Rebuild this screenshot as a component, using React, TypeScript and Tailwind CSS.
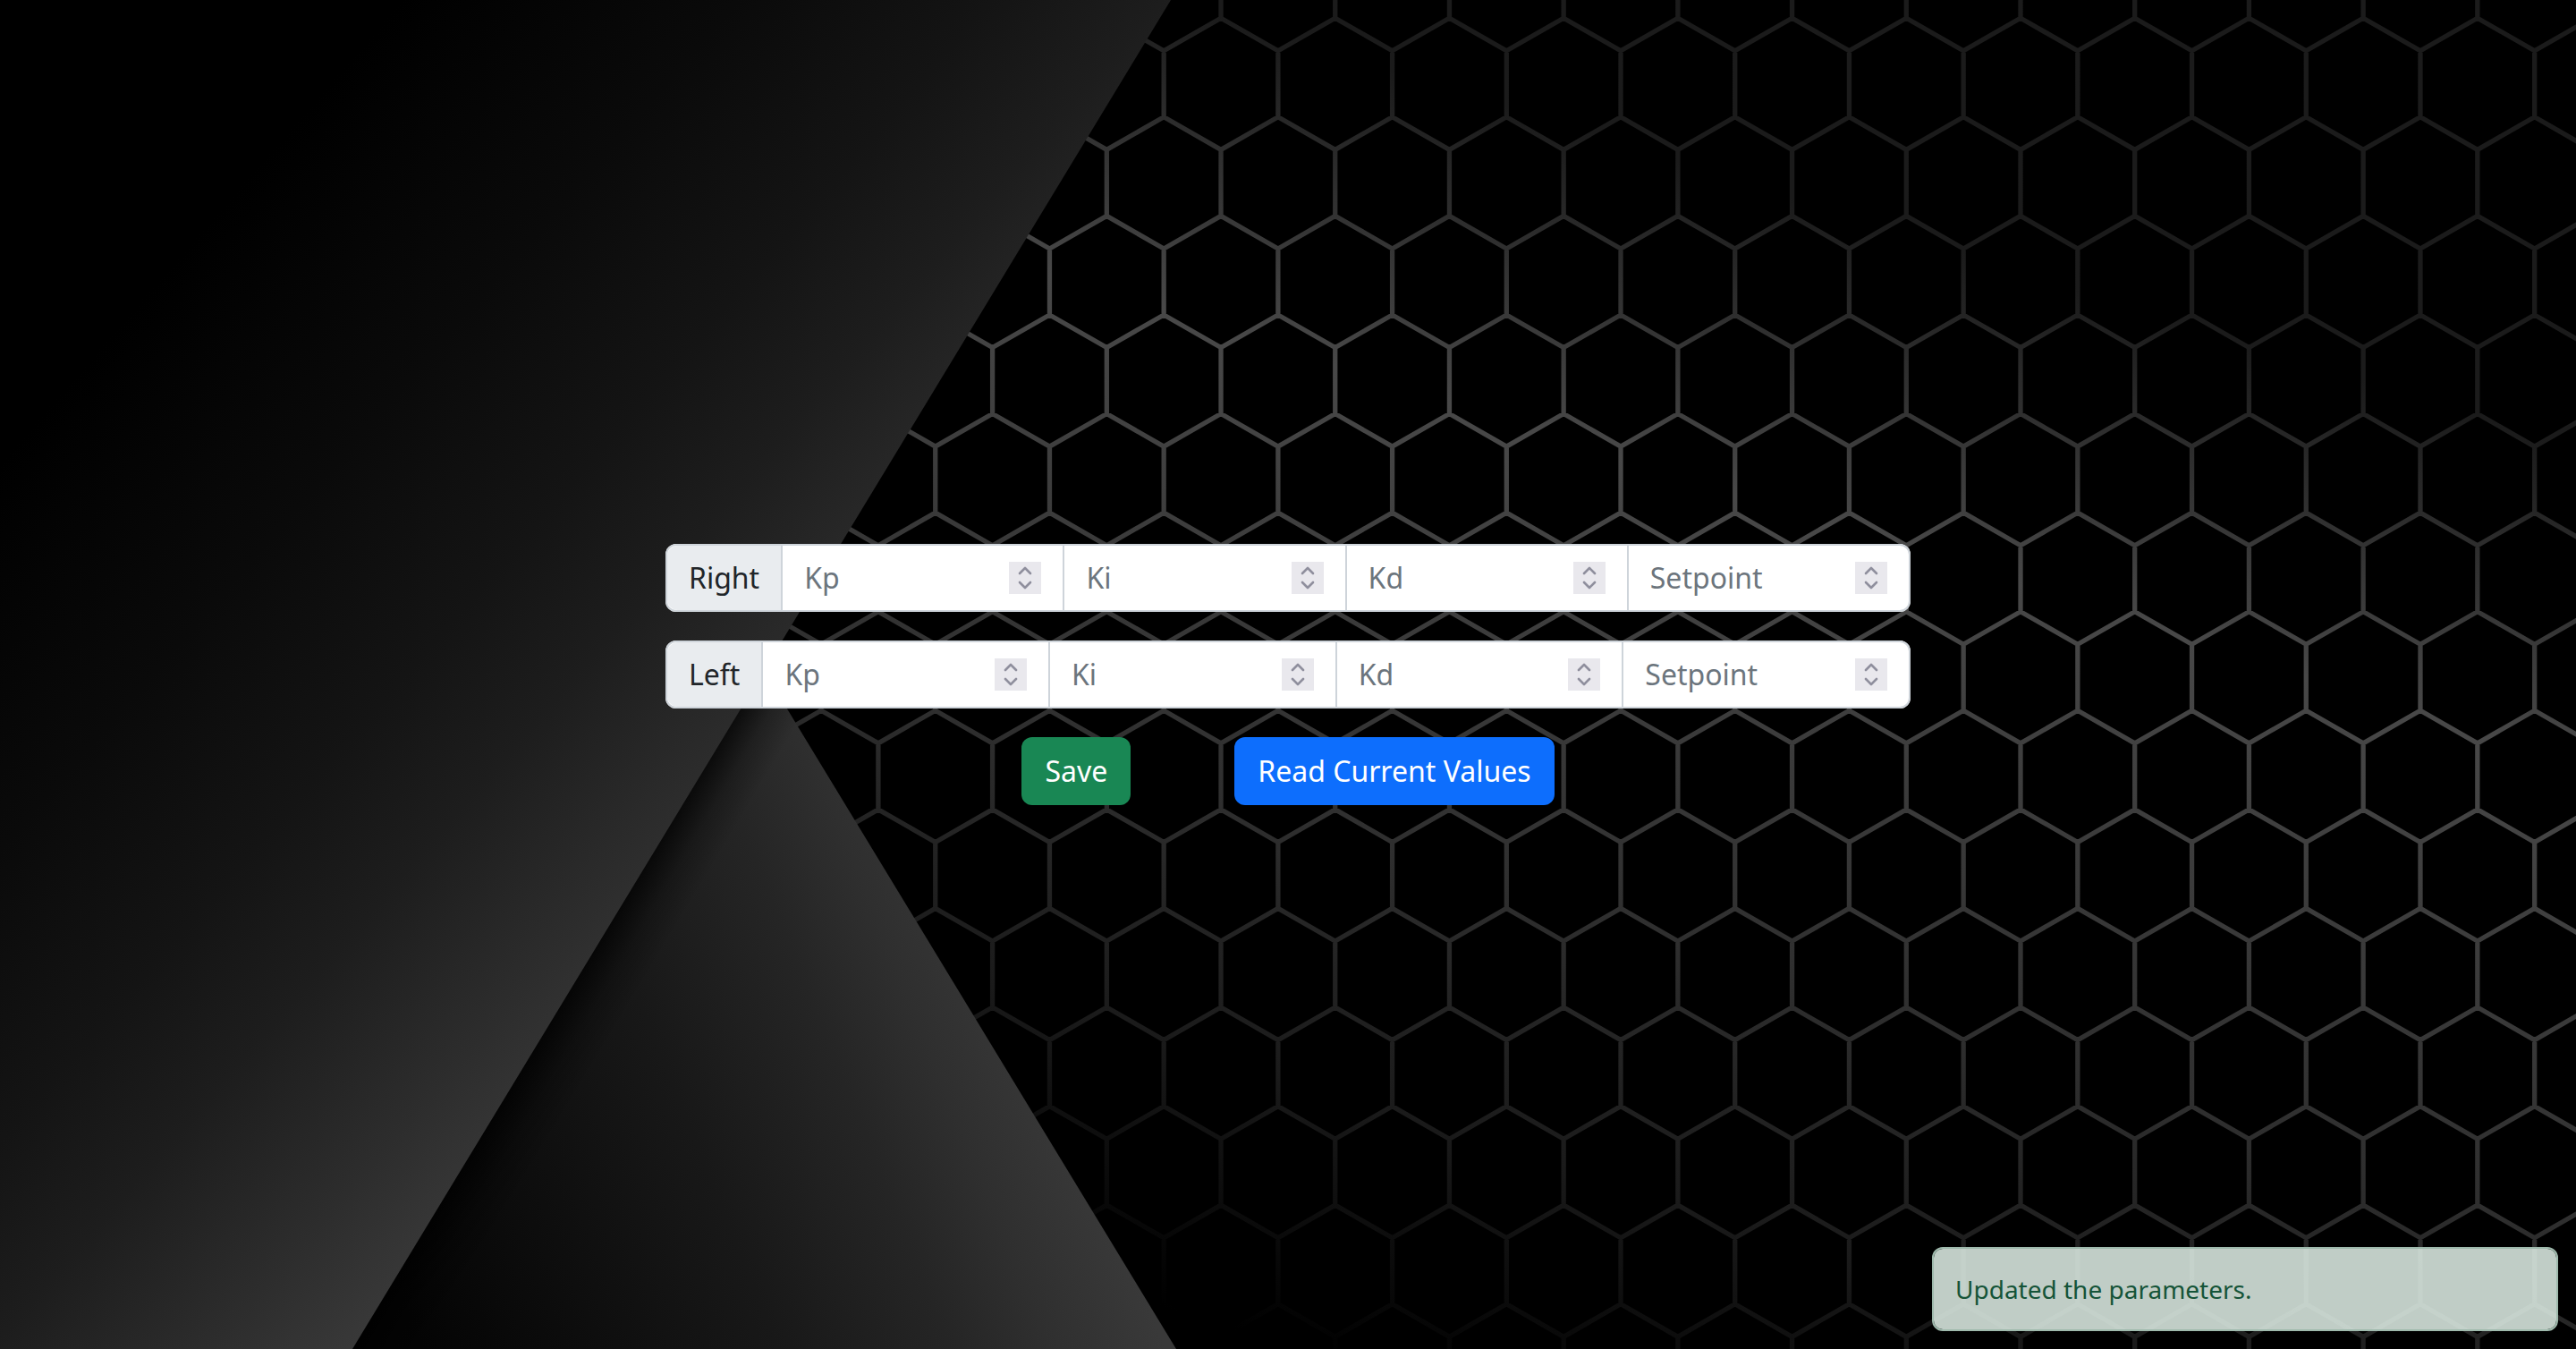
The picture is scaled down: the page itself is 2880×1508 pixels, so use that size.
import React, { useId } from "react";

type Stop = [number, string];

const wedgeStops: Stop[] = [
  [0, "#000000"],
  [0.3, "#0a0a0a"],
  [0.527, "#141414"],
  [0.68, "#1d1d1d"],
  [0.877, "#2d2d2d"],
  [1, "#383838"],
];

const lowStops: Stop[] = [
  [0, "#040404"],
  [0.478, "#181818"],
  [0.71, "#252525"],
  [0.843, "#2f2f2f"],
  [1, "#393939"],
];

const lineStops: Stop[] = [
  [0, "#1b1b1b"],
  [0.24, "#484848"],
  [0.594, "#2f2f2f"],
  [0.7, "#232323"],
  [0.79, "#1b1b1b"],
  [0.877, "#0f0f0f"],
  [1, "#000000"],
];

const CELL = 127.71;
const ROW = 110.58;
const SLANT = 36.6;

/** Zigzag rows joined by vertical walls, alternate rows shifted by half a cell. */
function honeycomb() {
  let d = "";
  for (let row = -1; row < 14; row++) {
    const top = 20.2 + row * ROW;
    const shift = row % 2 === 0 ? 0 : CELL / 2;
    const start = 407.2 + shift;
    d += `M${start} ${top + SLANT}`;
    for (let col = 0; col < 20; col++) {
      const x = start + col * CELL;
      d += `L${x + CELL / 2} ${top}L${x + CELL} ${top + SLANT}`;
    }
    for (let col = 0; col < 20; col++) {
      const x = start + col * CELL;
      d += `M${x} ${top + SLANT}V${top + ROW}`;
    }
  }
  return d;
}

const comb = honeycomb();

function Stops({ stops }: { stops: Stop[] }) {
  return (
    <>
      {stops.map(([offset, color]) => (
        <stop key={offset} offset={offset} stopColor={color} />
      ))}
    </>
  );
}

function Backdrop() {
  const id = useId();
  const ref = (name: string) => `url(#${id}${name})`;
  return (
    <svg
      aria-hidden="true"
      viewBox="0 0 2880 1508"
      preserveAspectRatio="xMidYMid slice"
      className="absolute inset-0 h-full w-full"
    >
      <defs>
        <linearGradient id={`${id}line`} gradientUnits="userSpaceOnUse" x1="1900" y1="188" x2="1475" y2="1517">
          <Stops stops={lineStops} />
        </linearGradient>
        <linearGradient id={`${id}wedge`} gradientUnits="userSpaceOnUse" x1="256" y1="223" x2="968" y2="842">
          <Stops stops={wedgeStops} />
        </linearGradient>
        <linearGradient id={`${id}low`} gradientUnits="userSpaceOnUse" x1="470" y1="1500" x2="1186" y2="1214">
          <Stops stops={lowStops} />
        </linearGradient>
        <linearGradient id={`${id}shade`} gradientUnits="userSpaceOnUse" x1="611" y1="1150" x2="668" y2="1184">
          <stop offset="0" stopColor="#000" stopOpacity="0.75" />
          <stop offset="0.5" stopColor="#000" stopOpacity="0.25" />
          <stop offset="1" stopColor="#000" stopOpacity="0" />
        </linearGradient>
      </defs>
      <rect width="2880" height="1508" fill="#000" />
      <path d={comb} fill="none" stroke={ref("line")} strokeWidth="5.3" />
      <path d="M836 720 1315 1508H394Z" fill={ref("low")} />
      <path d="M836 720 1315 1508H394Z" fill={ref("shade")} />
      <path d="M0 0H1309L394 1508H0Z" fill={ref("wedge")} />
    </svg>
  );
}

function Spinner() {
  return (
    <span className="flex h-9 w-9 shrink-0 items-center justify-center bg-[#e9e8ed]">
      <svg aria-hidden="true" viewBox="0 0 36 36" className="h-9 w-9 text-[#8f8f9d]">
        <path
          d="m12 13 6-6 6 6M12 23l6 6 6-6"
          fill="none"
          stroke="currentColor"
          strokeWidth="2.6"
          strokeLinecap="round"
          strokeLinejoin="round"
        />
      </svg>
    </span>
  );
}

const fields = ["Kp", "Ki", "Kd", "Setpoint"];

function GainRow({ side }: { side: string }) {
  return (
    <fieldset
      aria-label={side}
      className="flex h-19 overflow-hidden rounded-xl border-2 border-[#ced4da] bg-white text-[32px] leading-[48px]"
    >
      <span className="flex shrink-0 items-center bg-[#e9ecef] px-6 text-[#212529]">{side}</span>
      {fields.map((name) => (
        <label key={name} className="flex min-w-0 flex-1 items-center border-l-2 border-[#ced4da] px-6">
          <input
            type="text"
            inputMode="decimal"
            aria-label={`${side} ${name}`}
            placeholder={name}
            className="w-full min-w-0 flex-1 bg-transparent text-[#212529] outline-none placeholder:text-[#6c757d]"
          />
          <Spinner />
        </label>
      ))}
    </fieldset>
  );
}

export default function App() {
  return (
    <main className="relative flex h-screen flex-col items-center justify-center overflow-hidden bg-black font-['Noto_Sans',sans-serif]">
      <Backdrop />
      <form className="relative flex w-full max-w-[1392px] flex-col gap-8" onSubmit={(e) => e.preventDefault()}>
        <GainRow side="Right" />
        <GainRow side="Left" />
        <div className="flex justify-center gap-29 text-[32px] leading-[48px] text-white">
          <button type="submit" className="h-19 rounded-xl bg-[#198754] px-6.5">
            Save
          </button>
          <button type="button" className="h-19 rounded-xl bg-[#0d6efd] px-6.5">
            Read Current Values
          </button>
        </div>
      </form>
      <div
        role="alert"
        className="absolute right-5 bottom-5 w-[700px] rounded-xl border-2 border-[#9fbaad] bg-[#e2f1e9]/85 bg-clip-padding px-6 py-6 text-[28px] leading-[42px] text-[#155438]"
      >
        Updated the parameters.
      </div>
    </main>
  );
}
